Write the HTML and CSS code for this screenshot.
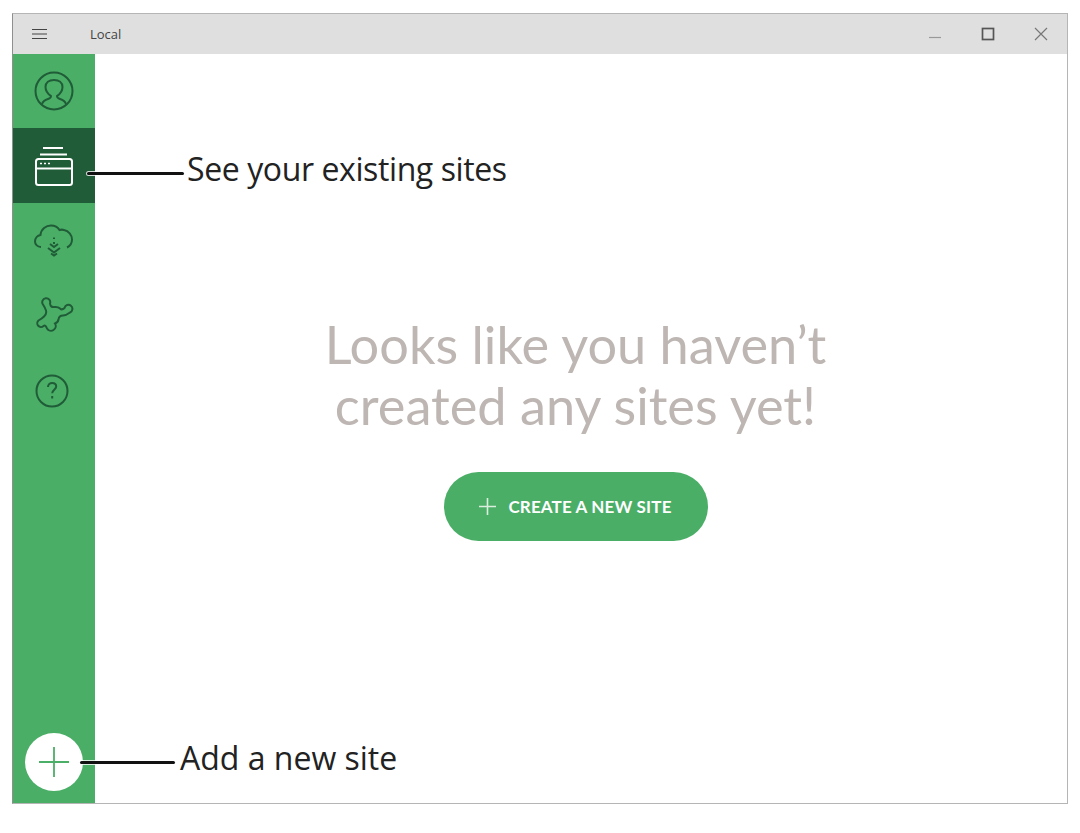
FILE: index.html
```html
<!DOCTYPE html>
<html lang="en">

<head>
    <meta charset="UTF-8">
    <meta name="viewport" content="width=device-width, initial-scale=1.0">
    <title>Local</title>
    <link rel="stylesheet" href="styles.css">
</head>

<body>
    <div class="window">
        <div class="titlebar">
            <svg class="menu-icon" width="16" height="12" viewBox="0 0 16 12">
                <path d="M0 1.500h15M0 6h15M0 10.500h15" fill="none" stroke="#444" stroke-width="1.200" />
            </svg>
            <span class="app-name">Local</span>
            <div class="window-controls">
                <svg width="14" height="14" viewBox="0 0 14 14">
                    <path d="M1 10.500h12" fill="none" stroke="#999" stroke-width="1.200" />
                </svg>
                <svg width="14" height="14" viewBox="0 0 14 14">
                    <rect x="1.500" y="1.500" width="11" height="11" fill="none" stroke="#555" stroke-width="1.700" />
                </svg>
                <svg width="14" height="14" viewBox="0 0 14 14">
                    <path d="M1 1l12 12M13 1L1 13" fill="none" stroke="#777" stroke-width="1.200" />
                </svg>
            </div>
        </div>

        <div class="main">
            <nav class="sidebar">
                <div class="nav-item nav-item-first">
                    <svg width="40" height="40" viewBox="0 0 40 40" fill="none" stroke="#1f5c37" stroke-width="2">
                        <circle cx="20" cy="20" r="18.500" />
                        <path d="M8 33c1-3 3-4 6-5 2-.7 3-1.500 3-3-3-2-5.500-5-5.500-9 0-4.500 3.500-7 8.500-7s8.500 2.500 8.500 7c0 4-2.500 7-5.500 9 0 1.500 1 2.300 3 3 3 1 5 2 6 5" />
                    </svg>
                </div>
                <div class="nav-item nav-item-active">
                    <svg width="40" height="40" viewBox="0 0 40 40" fill="none" stroke="#fff" stroke-width="2">
                        <path d="M9 2h20M6 8.500h27" />
                        <rect x="2" y="13" width="36" height="26" rx="2.500" />
                        <path d="M2 22.500h36" />
                        <path d="M6 17.500h2M10 17.500h2M14 17.500h2" stroke-width="1.500" />
                    </svg>
                </div>
                <div class="nav-item">
                    <svg width="40" height="34" viewBox="-1 -1 40 34" fill="none" stroke="#1f5c37" stroke-width="2">
                        <path d="M6 22C2 22 0 19 0 16.500 0 13 2.500 10.500 5.500 10 6 4 11 .5 16 .5c4 0 7 2 8.500 4.500 1.500-.5 3-.5 4.500 0 4.500 1 8 5 8 9.500 0 3.500-2 6.500-5 8" />
                        <path d="M19 12.500v1.500M19 17v2M15 19l4 3 4-3M13 23l6 4.500 6-4.500M16 28.500l3 2 3-2" />
                    </svg>
                </div>
                <div class="nav-item">
                    <svg width="40" height="38" viewBox="9 5.500 40 38" fill="none" stroke="#1f5c37" stroke-width="2">
                        <path d="M18 13A4 4 0 1 1 25 12Q25.500 16 29 15.500Q33 15 35 17Q37 19 39.500 16.500A4 4 0 1 1 45 21Q41 24 38 24Q34 24 33.500 28Q33 31 30 32A4 4 0 0 1 22 37Q20.500 33 18.500 34.500A3.500 3.500 0 1 1 13.500 29Q17 27 19 25Q22 22 21 19Q20 16 18 13Z" />
                    </svg>
                </div>
                <div class="nav-item">
                    <svg class="nav-icon-help" width="34" height="34" viewBox="0 0 34 34" fill="none" stroke="#1f5c37" stroke-width="2">
                        <circle cx="17" cy="17" r="15.500" />
                        <path d="M13 13c0-2.500 2-4 4.200-4 2.300 0 4 1.500 4 3.600 0 3-4 3.400-4 6.600" />
                        <path d="M17.200 22v2.500" />
                    </svg>
                </div>
                <button class="add-site">
                    <svg width="30" height="30" viewBox="0 0 30 30">
                        <path d="M0 15h30M15 0v30" fill="none" stroke="#4caf67" stroke-width="1.800" />
                    </svg>
                </button>
            </nav>

            <div class="content">
                <h1>Looks like you haven’t<br>created any sites yet!</h1>
                <button class="create-button">
                    <svg width="17" height="17" viewBox="0 0 17 17">
                        <path d="M0 8.500h17M8.500 0v17" fill="none" stroke="#d9eedd" stroke-width="1.600" />
                    </svg>
                    CREATE A NEW SITE
                </button>
            </div>
        </div>
    </div>

    <div class="callout callout-sites">
        <span class="callout-line"></span>
        <span class="callout-text">See your existing sites</span>
    </div>
    <div class="callout callout-add">
        <span class="callout-line"></span>
        <span class="callout-text">Add a new site</span>
    </div>
</body>

</html>
```

FILE: styles.css
```css
body {
    margin: 0;
    height: 833px;
    padding: 13px 12px 0;
    box-sizing: border-box;
    background-color: white;
    font-family: "Lato", sans-serif;
    overflow: hidden;
}

.window {
    width: 1056px;
    height: 791px;
    box-sizing: border-box;
    border: 1px solid #b5b5b5;
    border-left-color: #8f8f8f;
    display: flex;
    flex-direction: column;
}

.titlebar {
    height: 40px;
    background-color: #dfdfdf;
    display: flex;
    align-items: center;
    padding-left: 19px;
    flex-shrink: 0;
}

.menu-icon {
    flex-shrink: 0;
}

.app-name {
    margin-left: 42px;
    font-family: "Open Sans", sans-serif;
    font-size: 13px;
    color: #444;
}

.window-controls {
    margin-left: auto;
    margin-right: 19px;
    display: flex;
    gap: 39px;
}

.main {
    flex: 1;
    display: flex;
    min-height: 0;
}

.sidebar {
    width: 82px;
    background-color: #4bae67;
    display: flex;
    flex-direction: column;
    flex-shrink: 0;
}

.nav-item {
    height: 75px;
    display: flex;
    align-items: center;
    justify-content: center;
}

.nav-item-first {
    height: 74px;
}

.nav-item-active {
    background-color: #1f5c37;
}

.nav-icon-help {
    margin-right: 4px;
}

.add-site {
    margin: auto 0 12px 12px;
    width: 58px;
    height: 58px;
    padding: 0;
    border: none;
    border-radius: 50%;
    background-color: white;
    display: flex;
    align-items: center;
    justify-content: center;
}

.content {
    flex: 1;
    display: flex;
    flex-direction: column;
    align-items: center;
    padding: 259px 11px 0 0;
}

h1 {
    margin: 0;
    font-size: 52.300px;
    font-weight: 400;
    line-height: 61px;
    text-align: center;
    color: #bdb6b3;
}

.create-button {
    margin-top: 37px;
    width: 264px;
    height: 69px;
    padding-bottom: 2px;
    border: none;
    border-radius: 35px;
    background-color: #4bae67;
    color: white;
    font-family: "Lato", sans-serif;
    font-size: 17px;
    font-weight: 700;
    letter-spacing: 0.15px;
    display: flex;
    align-items: center;
    justify-content: center;
    gap: 12px;
}

.callout {
    position: absolute;
    display: flex;
    align-items: center;
    gap: 3px;
}

.callout-sites {
    left: 87px;
    top: 149px;
}

.callout-add {
    left: 80px;
    top: 738px;
    gap: 5px;
}

.callout-line {
    height: 3px;
    margin-top: 8px;
    background-color: #111;
    border-radius: 2px;
    box-shadow: 0 0 0 1px rgba(255, 255, 255, 0.8);
}

.callout-sites .callout-line {
    width: 97px;
}

.callout-add .callout-line {
    width: 95px;
}

.callout-text {
    font-family: "Open Sans", sans-serif;
    font-size: 32px;
    line-height: 40px;
    letter-spacing: -0.4px;
    color: #222;
}

.callout-add .callout-text {
    letter-spacing: 0;
}
```
